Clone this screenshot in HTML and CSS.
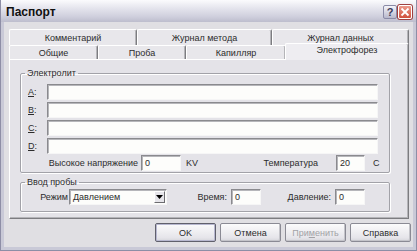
FILE: index.html
```html
<!DOCTYPE html>
<html lang="ru">
<head>
    <meta charset="UTF-8">
    <title>Паспорт</title>
    <link rel="stylesheet" href="styles.css">
</head>
<body>

<div class="window">
    <div class="titlebar">
        <span class="title">Паспорт</span>
        <div class="caption-buttons">
            <span class="cap-btn help">?</span>
            <span class="cap-btn close">
                <svg width="10" height="10" viewBox="0 0 10 10"><path d="M1.5 1.5 L8.5 8.5 M8.5 1.5 L1.5 8.5" stroke="#fff" stroke-width="1.8" fill="none"/></svg>
            </span>
        </div>
    </div>

    <div class="dialog">
        <!-- Tabs -->
        <div class="tabs">
            <div class="tab-row back">
                <div class="tab">Комментарий</div>
                <div class="tab">Журнал метода</div>
                <div class="tab">Журнал данных</div>
            </div>
            <div class="tab-row front">
                <div class="tab">Общие</div>
                <div class="tab">Проба</div>
                <div class="tab">Капилляр</div>
                <div class="tab active">Электрофорез</div>
            </div>
        </div>

        <div class="panel">
            <fieldset class="group electrolyte">
                <legend>Электролит</legend>
                <div class="solutions">
                    <span class="key"><u>A</u>:</span><div class="field"></div>
                    <span class="key"><u>B</u>:</span><div class="field"></div>
                    <span class="key"><u>C</u>:</span><div class="field"></div>
                    <span class="key"><u>D</u>:</span><div class="field"></div>
                </div>
                <div class="hv-row">
                    <span class="hv-label">Высокое напряжение</span>
                    <div class="field hv">0</div>
                    <span class="unit">KV</span>
                    <span class="temp-label">Температура</span>
                    <div class="field temp">20</div>
                    <span class="unit deg">C</span>
                </div>
            </fieldset>

            <fieldset class="group injection">
                <legend>Ввод пробы</legend>
                <div class="inj-row">
                    <span class="mode-label">Режим</span>
                    <div class="combo">
                        <span class="combo-text">Давлением</span>
                        <span class="combo-btn">
                            <svg width="7" height="4" viewBox="0 0 7 4"><path d="M0 0 H7 L3.5 4 Z" fill="#000"/></svg>
                        </span>
                    </div>
                    <span class="time-label">Время:</span>
                    <div class="field short">0</div>
                    <span class="pressure-label">Давление:</span>
                    <div class="field short">0</div>
                </div>
            </fieldset>
        </div>

        <div class="buttons">
            <button class="btn default">OK</button>
            <button class="btn">Отмена</button>
            <button class="btn disabled">При<u>м</u>енить</button>
            <button class="btn">Справка</button>
        </div>
    </div>
</div>

</body>
</html>
```

FILE: styles.css
```css
/* General */
body {
    margin: 0;
    padding: 0;
    width: 417px;
    height: 251px;
    overflow: hidden;
    font-family: "Liberation Sans", Arial, sans-serif;
    font-size: 9px;
    color: #2c2c2c;
    background: #c8c8d6;
}

/* Window frame */
.window {
    box-sizing: border-box;
    width: 417px;
    height: 251px;
    border: 1px solid #8e8ea6;
    border-top: none;
    padding: 0 3px 3px 3px;
    background: #c9c9d7;
    display: flex;
    flex-direction: column;
}

.titlebar {
    height: 22px;
    margin: 0 -3px;
    padding: 1px 4px 0 5px;
    box-sizing: border-box;
    display: flex;
    align-items: center;
    justify-content: space-between;
    background: linear-gradient(180deg, #fbfbfd 0%, #e6e6ee 35%, #cfcfdd 75%, #bdbdcd 100%);
}

.title {
    font-size: 12px;
    font-weight: bold;
    color: #111;
}

.caption-buttons {
    display: flex;
    gap: 1px;
}

.cap-btn {
    width: 14px;
    height: 14px;
    box-sizing: border-box;
    border-radius: 2px;
    display: flex;
    align-items: center;
    justify-content: center;
}

.cap-btn.help {
    border: 1px solid #8a8aa6;
    background: linear-gradient(180deg, #f4f4fa, #b8b8cc);
    color: #3a3a5a;
    font-size: 11px;
    font-weight: bold;
}

.cap-btn.close {
    border: 1px solid #fff;
    box-shadow: 0 0 0 1px #a04040;
    background: linear-gradient(180deg, #ec9a8c, #d0503c);
}

/* Dialog body */
.dialog {
    flex: 1;
    background: #e0dfe3;
    padding: 7px 4px 0 5px;
    display: flex;
    flex-direction: column;
}

/* Tabs */
.tab-row {
    display: grid;
}

.tab-row.back {
    grid-template-columns: 128px 135px 1fr;
    height: 16px;
}

.tab-row.front {
    grid-template-columns: 89px 88px 100px 1fr;
    height: 14px;
}

.tab {
    box-sizing: border-box;
    background: #e8e7eb;
    border-top: 1px solid #fff;
    border-left: 1px solid #fff;
    border-right: 1px solid #7c7c80;
    box-shadow: inset -1px 0 0 #b4b4b8;
    border-radius: 2px 2px 0 0;
    text-align: center;
    line-height: 14px;
}

.tab-row.back .tab {
    padding-top: 2px;
    line-height: 13px;
}

.tab.active {
    position: relative;
    z-index: 1;
    height: 17px;
    margin-top: -2px;
    margin-left: -1px;
    background: #eeedf1;
    line-height: 13px;
}

/* Tab panel */
.panel {
    box-sizing: border-box;
    height: 160px;
    border: 1px solid;
    border-color: #fff #7c7c80 #7c7c80 #fff;
    box-shadow: inset -1px -1px 0 #b4b4b8;
    background: #e4e3e8;
    padding: 8px 18px 0 10px;
}

/* Group boxes */
.group {
    margin: 0;
    min-width: 0;
    border: 1px solid #a2a2a8;
    box-shadow: inset 1px 1px 0 #fff, 1px 1px 0 #fff;
    border-radius: 2px;
}

.group legend {
    padding: 0 2px;
    margin-left: -3px;
    line-height: 10px;
}

.electrolyte {
    padding: 6px 11px 1px 7px;
}

.injection {
    margin-top: 4px;
    padding: 2px 11px 6px 7px;
}

.solutions {
    display: grid;
    grid-template-columns: 19px 1fr;
    grid-auto-rows: 16px;
    row-gap: 2px;
    align-items: center;
}

/* Edit fields */
.field {
    box-sizing: border-box;
    height: 16px;
    background: #fdfdfb;
    border-top: 1px solid #8a8a8e;
    border-left: 1px solid #8a8a8e;
    border-right: 1px solid #f6f6f6;
    border-bottom: 1px solid #f6f6f6;
    box-shadow: inset 1px 1px 0 #b6b6ba;
    padding: 1px 0 0 3px;
    line-height: 13px;
}

.hv-row, .inj-row {
    display: flex;
    align-items: center;
    height: 16px;
}

.hv-row {
    margin-top: 1px;
}

.hv-label {
    width: 110px;
    text-align: right;
}

.field.hv {
    width: 40px;
    margin-left: 3px;
}

.unit {
    margin-left: 5px;
}

.temp-label {
    margin-left: auto;
}

.field.temp {
    width: 29px;
    margin-left: 18px;
}

.unit.deg {
    margin-left: 8px;
    width: 5px;
}

/* Injection row */
.mode-label {
    width: 40px;
    text-align: right;
}

.combo {
    box-sizing: border-box;
    width: 98px;
    height: 16px;
    margin-left: 1px;
    display: flex;
    align-items: center;
    justify-content: space-between;
    background: #fdfdfb;
    border-top: 1px solid #8a8a8e;
    border-left: 1px solid #8a8a8e;
    border-right: 1px solid #f6f6f6;
    border-bottom: 1px solid #f6f6f6;
    box-shadow: inset 1px 1px 0 #b6b6ba;
    padding: 1px 1px 1px 3px;
}

.combo-btn {
    box-sizing: border-box;
    width: 11px;
    height: 12px;
    display: flex;
    align-items: center;
    justify-content: center;
    background: #e6e5ea;
    border: 1px solid;
    border-color: #fff #6c6c70 #6c6c70 #fff;
}

.time-label {
    width: 60px;
    text-align: right;
}

.field.short {
    width: 30px;
    margin-left: 4px;
}

.pressure-label {
    width: 70px;
    text-align: right;
}

/* Dialog buttons */
.buttons {
    display: flex;
    justify-content: flex-end;
    gap: 4px;
    margin: 4px -2px 0 0;
}

.btn {
    width: 61px;
    height: 19px;
    padding: 0;
    font-family: inherit;
    font-size: 9px;
    color: #2c2c2c;
    border: 1px solid #8a8a94;
    border-radius: 2px;
    background: linear-gradient(180deg, #fbfbfc, #e6e5ea 80%, #d6d6dc);
    box-shadow: inset -1px -1px 0 #c4c4ca;
}

.btn.default {
    border-color: #60606c;
    box-shadow: inset 0 0 0 1px #b8b8d0;
}

.btn.disabled {
    color: #a2a2a6;
}
```
